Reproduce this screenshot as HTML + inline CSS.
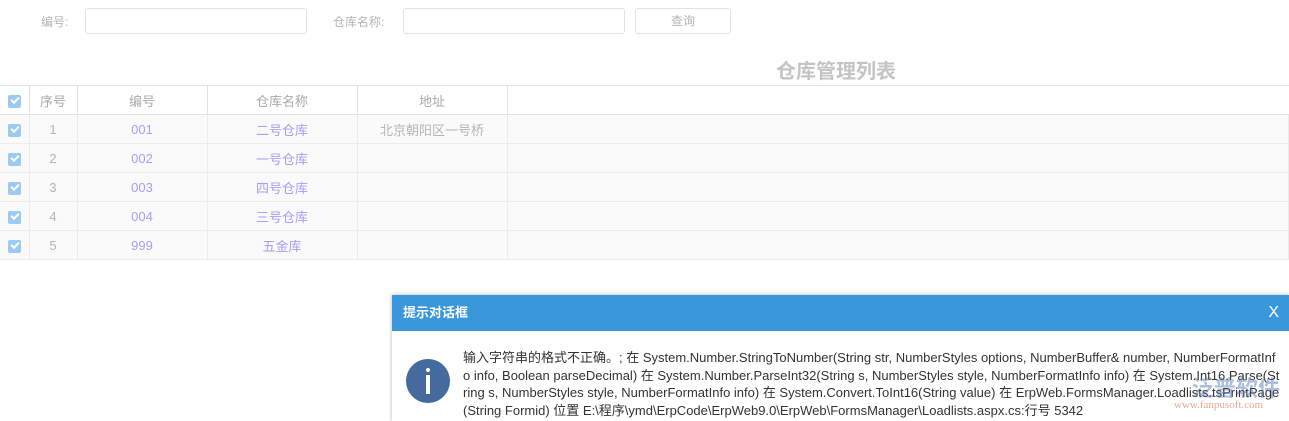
<!DOCTYPE html>
<html><head><meta charset="utf-8"><style>
body{margin:0;width:1289px;height:421px;overflow:hidden;background:#fff;font-family:"Liberation Sans","Noto Sans CJK SC",sans-serif;font-size:12px;color:#aaa;position:relative}
.a{position:absolute}
.inp{position:absolute;top:8px;height:26px;border:1px solid #e3e3e3;border-radius:3px;box-sizing:border-box}
.lbl{position:absolute;top:13px;color:#b5b5b5;font-size:12px}
table{position:absolute;top:85px;left:0;border-collapse:collapse;width:1289px;table-layout:fixed}
td{height:28px;border:1px solid #ececec;text-align:center;padding:0;color:#b5b5b5;font-size:13px}
td:first-child{border-left:none}
tr.h td{border-color:#e3e3e3;background:#fff;color:#aaa;font-size:13px}
tr.r td{background:#fafafa}
.cb{display:inline-block;width:13px;height:13px;background:#9bcaf2;border-radius:2px;position:relative;vertical-align:middle}
.cb:after{content:"";position:absolute;left:3px;top:2px;width:6px;height:3px;border-left:2px solid #fff;border-bottom:2px solid #fff;transform:rotate(-45deg)}
.p{color:#a79ef5}
</style></head><body>
<div class="lbl" style="left:41px">编号:</div>
<div class="inp" style="left:85px;width:222px"></div>
<div class="lbl" style="left:333px">仓库名称:</div>
<div class="inp" style="left:403px;width:222px"></div>
<div class="inp" style="left:635px;width:96px;text-align:center;line-height:24px;color:#b5b5b5">查询</div>
<div class="a" style="left:776px;top:55px;font-size:20px;font-weight:bold;color:#c4c4c4">仓库管理列表</div>
<table>
<colgroup><col style="width:29px"><col style="width:48px"><col style="width:130px"><col style="width:150px"><col style="width:150px"><col></colgroup>
<tr class="h"><td><span class="cb"></span></td><td>序号</td><td>编号</td><td>仓库名称</td><td>地址</td><td style="border-right:none"></td></tr>
<tr class="r"><td><span class="cb"></span></td><td>1</td><td class="p">001</td><td class="p">二号仓库</td><td>北京朝阳区一号桥</td><td></td></tr>
<tr class="r"><td><span class="cb"></span></td><td>2</td><td class="p">002</td><td class="p">一号仓库</td><td></td><td></td></tr>
<tr class="r"><td><span class="cb"></span></td><td>3</td><td class="p">003</td><td class="p">四号仓库</td><td></td><td></td></tr>
<tr class="r"><td><span class="cb"></span></td><td>4</td><td class="p">004</td><td class="p">三号仓库</td><td></td><td></td></tr>
<tr class="r"><td><span class="cb"></span></td><td>5</td><td class="p">999</td><td class="p">五金库</td><td></td><td></td></tr>
</table>
<div class="a" style="left:392px;top:295px;width:897px;height:126px;background:#fff;box-shadow:0 0 4px rgba(0,0,0,.3)">
<div style="height:36px;background:#3a97dc;color:#fff;font-weight:bold;font-size:13px;line-height:36px;padding-left:11px">提示对话框<span style="position:absolute;right:10px;top:0;font-weight:normal;font-size:16px">X</span></div>
<div class="a" style="left:14px;top:64px;width:44px;height:44px;border-radius:50%;background:#456a9e"><div class="a" style="left:20px;top:9px;width:4px;height:4px;background:#fff;border-radius:2px"></div><div class="a" style="left:20px;top:16px;width:4px;height:19px;background:#fff"></div></div>
<div class="a" style="left:71px;top:54px;width:818px;color:#333;font-size:13px;line-height:17.5px;word-break:break-all">输入字符串的格式不正确。; 在 System.Number.StringToNumber(String str, NumberStyles options, NumberBuffer&amp; number, NumberFormatInfo info, Boolean parseDecimal) 在 System.Number.ParseInt32(String s, NumberStyles style, NumberFormatInfo info) 在 System.Int16.Parse(String s, NumberStyles style, NumberFormatInfo info) 在 System.Convert.ToInt16(String value) 在 ErpWeb.FormsManager.Loadlists.tsPrintPage(String Formid) 位置 E:\程序\ymd\ErpCode\ErpWeb9.0\ErpWeb\FormsManager\Loadlists.aspx.cs:行号 5342</div>
<div class="a" style="left:800px;top:76px;font-size:22px;font-weight:bold;color:rgba(70,110,170,.45)">泛普软件</div>
<div class="a" style="left:782px;top:104px;font-size:11px;color:rgba(220,110,80,.6);font-family:'Liberation Serif',serif">www.fanpusoft.com</div>
</div>
</body></html>
